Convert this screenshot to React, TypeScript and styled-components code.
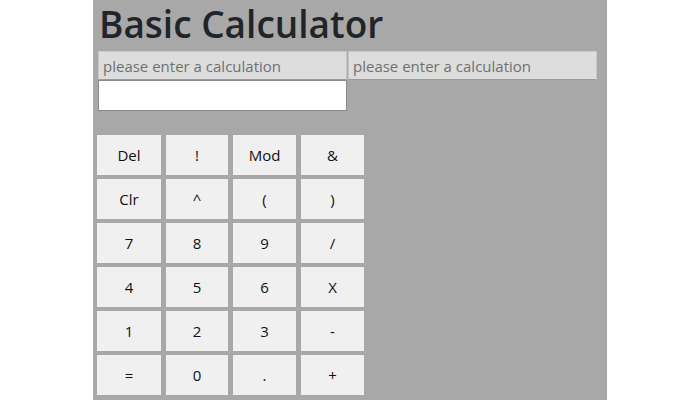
import React from "react";
import styled, { createGlobalStyle } from "styled-components";

const Global = createGlobalStyle`
  html, body { margin: 0; padding: 0; background: #ffffff; }
  body { font-family: "Open Sans", "Noto Sans", sans-serif; }
`;

const Panel = styled.div`
  width: 504px;
  min-height: 400px;
  margin: 0 auto;
  padding: 0 5px;
  background: #a8a8a8;
  box-sizing: content-box;
`;

const Title = styled.h1`
  margin: 0;
  padding: 1px 0 0 1px;
  font-family: "Open Sans", "Noto Sans", sans-serif;
  font-weight: 600;
  font-size: 37px;
  line-height: 45px;
  color: #212529;
`;

const Inputs = styled.div`
  display: flex;
  flex-wrap: wrap;
  width: 500px;
  margin-top: 5px;
`;

const Field = styled.input<{ $white?: boolean }>`
  box-sizing: border-box;
  width: 249px;
  height: ${(p) => (p.$white ? "31px" : "29px")};
  margin: 0 1px 0 0;
  padding: 0 4px;
  font-family: "Open Sans", "Noto Sans", sans-serif;
  font-size: 15px;
  color: #222;
  background: ${(p) => (p.$white ? "#ffffff" : "#dddddd")};
  border: 1px solid ${(p) => (p.$white ? "#8a8a8a" : "#c8c8c8")};
  border-bottom-color: ${(p) => (p.$white ? "#8a8a8a" : "#9a9a9a")};
  border-radius: 0;
  outline: none;
  &::placeholder { color: #707070; }
`;

const Keys = styled.div`
  display: grid;
  grid-template-columns: 64px 62px 63px 63px;
  grid-auto-rows: 40px;
  column-gap: 5px;
  row-gap: 4px;
  margin: 24px 0 0 -1px;
`;

const Key = styled.button`
  border: none;
  margin: 0;
  padding: 0;
  background: #f0f0f0;
  color: #111;
  font-family: "Open Sans", "Noto Sans", sans-serif;
  font-size: 15px;
  cursor: pointer;
`;

const keys = [
  "Del", "!", "Mod", "&",
  "Clr", "^", "(", ")",
  "7", "8", "9", "/",
  "4", "5", "6", "X",
  "1", "2", "3", "-",
  "=", "0", ".", "+",
];

export default function App() {
  return (
    <>
      <Global />
      <Panel>
        <Title>Basic Calculator</Title>
        <Inputs>
          <Field placeholder="please enter a calculation" readOnly />
          <Field placeholder="please enter a calculation" readOnly />
          <Field $white readOnly />
        </Inputs>
        <Keys>
          {keys.map((k) => (
            <Key key={k}>{k}</Key>
          ))}
        </Keys>
      </Panel>
    </>
  );
}
